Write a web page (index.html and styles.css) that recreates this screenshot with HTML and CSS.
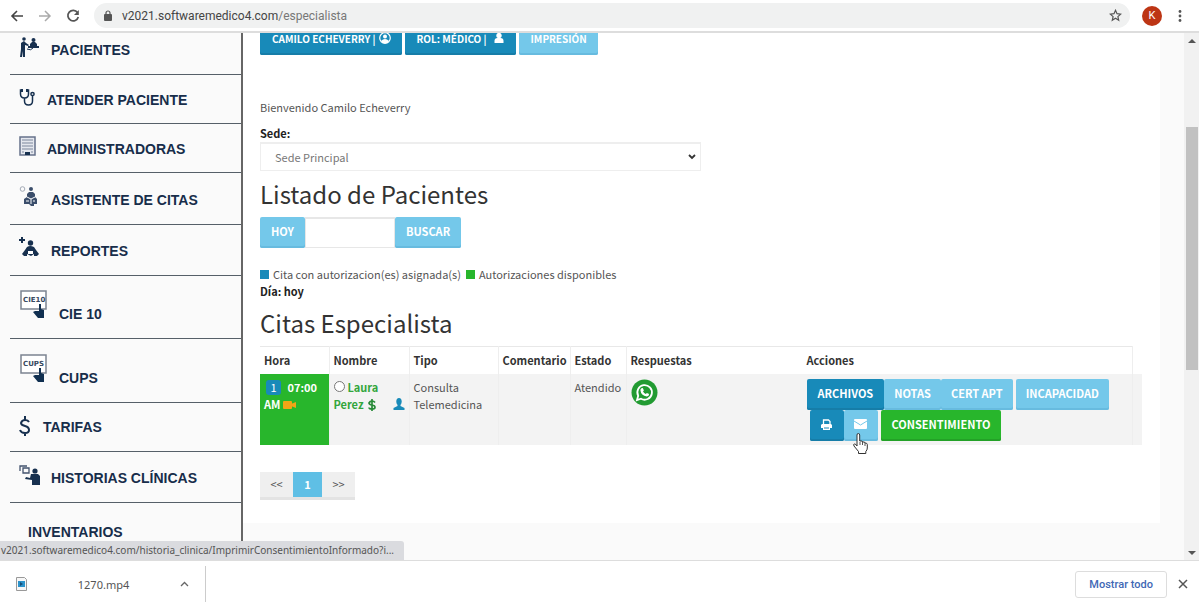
FILE: index.html
```html
<!DOCTYPE html>
<html lang="es">
<head>
<meta charset="utf-8">
<meta name="viewport" content="width=device-width, initial-scale=1">
<title>Especialista</title>
<link rel="stylesheet" href="styles.css">
</head>
<body>
<header class="toolbar">
  <button class="icon-btn" aria-label="Atrás"><svg width="14" height="14" viewBox="0 0 14 14" fill="none" stroke="#444" stroke-width="1.6"><path d="M13 7H2M7 2L2 7l5 5"/></svg></button>
  <button class="icon-btn" aria-label="Adelante"><svg width="14" height="14" viewBox="0 0 14 14" fill="none" stroke="#aaa" stroke-width="1.5"><path d="M1 7h11M7 2l5 5-5 5"/></svg></button>
  <button class="icon-btn" aria-label="Recargar"><svg width="14" height="14" viewBox="0 0 14 14" fill="none" stroke="#555" stroke-width="1.7"><path d="M11.5 3.5A5.3 5.3 0 1 0 12.3 8"/><path d="M12.8 1v5H8z" fill="#555" stroke="none"/></svg></button>
  <div class="address">
    <svg width="8" height="11" viewBox="0 0 8 11"><rect y="4" width="8" height="7" rx="1" fill="#555"/><path d="M2 5V3a2 2 0 0 1 4 0v2" fill="none" stroke="#555" stroke-width="1.2"/></svg>
    <span class="url">v2021.softwaremedico4.com<span class="path">/especialista</span></span>
    <svg class="star" width="13" height="13" viewBox="0 0 13 13" fill="none" stroke="#555" stroke-width="1.2"><path d="M6.500 1.300l1.500 3.400 3.700.4-2.800 2.500.8 3.600-3.200-1.900-3.200 1.900.8-3.600L1.300 5.100l3.700-.4z"/></svg>
  </div>
  <button class="avatar">K</button>
  <button class="icon-btn" aria-label="Menú"><svg width="4" height="14" viewBox="0 0 4 14" fill="#555"><circle cx="2" cy="2.500" r="1.400"/><circle cx="2" cy="7" r="1.400"/><circle cx="2" cy="11.500" r="1.400"/></svg></button>
</header>

<div class="viewport">
  <nav class="sidebar">
    <a class="item first" href="#"><svg width="21" height="21" viewBox="0 0 21 21" fill="#17304f"><circle cx="5" cy="2" r="1.800"/><path d="M2 6l3-2 2 2 3 2-1 1-3-1v4l0 8H4v-6l-1 6H1l1-8z"/><circle cx="14.500" cy="3" r="2"/><path d="M11 9V7l2-2h3l2 2v2h2v2H9V9z"/><path d="M8 12q4 2 6-1" fill="none" stroke="#17304f"/></svg>PACIENTES</a>
    <a class="item tight" href="#"><svg width="17" height="18" viewBox="0 0 17 18" fill="none" stroke="#17304f" stroke-width="1.500"><path d="M3 2H1.500v4q0 4 4 4t4-4V2H8M5.500 10v3q0 4 4 4t4-4V8"/><circle cx="13.500" cy="6" r="1.600"/><path d="M3 1v3M8 1v3" stroke-width="2"/></svg>ATENDER PACIENTE</a>
    <a class="item tight" href="#"><svg width="17" height="20" viewBox="0 0 17 20"><path d="M1 1h15v18H1z" fill="#e4e7ee" stroke="#66718b" stroke-width="1.500"/><path d="M3 4h11M3 7h11M3 10h11M3 13h11M3 16h2M12 16h2" stroke="#7d879b" stroke-width="1.200"/><path d="M6 19v-3h5v3z" fill="#17304f"/></svg>ADMINISTRADORAS</a>
    <a class="item tall" href="#"><svg width="21" height="21" viewBox="0 0 21 21" fill="#3b4e6b"><circle cx="3.500" cy="3" r="2.300" fill="none" stroke="#a3aab6"/><circle cx="12" cy="3" r="2"/><path d="M8 11V8l2-2h4l2 2v3l2 2v5h-3v2h-3l-2-2H5v-5z"/><path d="M8 11l4 2 4-2M7 15h3M14 15h2M12 13v5" stroke="#fff" fill="none"/></svg>ASISTENTE DE CITAS</a>
    <a class="item" href="#"><svg width="21" height="21" viewBox="0 0 21 21" fill="#17304f"><path d="M2 0h2v2h2v2H4v2H2V4H0V2h2z"/><circle cx="11.500" cy="6" r="2.700"/><path d="M8 10q3-2 7 0l2 3 3 4-2 2h-3v-2l-3 2-4-2v2H5l-2-2 3-4z"/><path d="M9 14h5v3H9z" fill="#fff"/></svg>REPORTES</a>
    <a class="item code short" href="#"><svg width="28" height="30" viewBox="0 0 28 30"><path d="M2 2h25v18H2z" fill="#fff" stroke="#7c8491" stroke-width="1.500"/><text x="4" y="13" class="code-text">CIE10</text><path d="M20 15h2v5l3 1v8h-6l-5-6 2-1h4z" fill="#102f50"/></svg>CIE 10</a>
    <a class="item code" href="#"><svg width="28" height="30" viewBox="0 0 28 30"><path d="M2 2h25v18H2z" fill="#fff" stroke="#7c8491" stroke-width="1.500"/><text x="4" y="13" class="code-text">CUPS</text><path d="M20 15h2v5l3 1v8h-6l-5-6 2-1h4z" fill="#102f50"/></svg>CUPS</a>
    <a class="item money" href="#"><svg width="12" height="20" viewBox="0 0 12 20" fill="none" stroke="#17304f" stroke-width="2"><path d="M10 6Q9 4 6 4T2 7q0 2 4 3t4 4q0 3-4 3t-5-3M6 0v4M6 16v4"/></svg>TARIFAS</a>
    <a class="item" href="#"><svg width="21" height="20" viewBox="0 0 21 20" fill="#17304f"><path d="M1 6V1h7M4 3h6v5H4z" fill="none" stroke="#43536e" stroke-width="1.300"/><circle cx="16" cy="6" r="2.600"/><path d="M12 9h7l2 2v9h-8v-5l-7-1 1-2 4 1z"/></svg>HISTORIAS CLÍNICAS</a>
    <a class="item last" href="#">INVENTARIOS</a>
  </nav>

  <div class="scroll">
  <main class="card">
    <div class="top-actions">
      <button class="btn dark">CAMILO ECHEVERRY | <svg width="12" height="12" viewBox="0 0 12 12"><circle cx="6" cy="6" r="5.300" fill="none" stroke="#fff" stroke-width="1.200"/><circle cx="6" cy="4.500" r="2" fill="#fff"/><path d="M2 9q4-4 8 0l-2 2H4z" fill="#fff"/></svg></button>
      <button class="btn dark">ROL: MÉDICO | <svg class="user" width="12" height="12" viewBox="0 0 12 12" fill="#fff"><circle cx="6" cy="3.500" r="2.700"/><path d="M1.500 11V9q0-3 3-3h3q3 0 3 3v2z"/></svg></button>
      <button class="btn light">IMPRESIÓN</button>
    </div>
    <p class="welcome">Bienvenido Camilo Echeverry</p>
    <label class="label" for="sede">Sede:</label>
    <div class="select-wrap">
      <select id="sede"><option>Sede Principal</option></select>
      <svg width="8" height="6" viewBox="0 0 8 6" fill="none" stroke="#333" stroke-width="1.800"><path d="M1 1l3 3 3-3"/></svg>
    </div>
    <h2>Listado de Pacientes</h2>
    <form class="search">
      <button type="button" class="btn light">HOY</button>
      <input type="text" aria-label="Fecha">
      <button type="button" class="btn light">BUSCAR</button>
    </form>
    <p class="legend"><i class="key blue"></i>Cita con autorizacion(es) asignada(s)<i class="key lime"></i>Autorizaciones disponibles</p>
    <p class="day">Día: hoy</p>
    <h2>Citas Especialista</h2>
    <table>
      <colgroup><col class="c-hora"><col class="c-nombre"><col class="c-tipo"><col class="c-com"><col class="c-est"><col class="c-resp"><col><col class="c-end"></colgroup>
      <thead><tr><th>Hora</th><th>Nombre</th><th>Tipo</th><th>Comentario</th><th>Estado</th><th class="open">Respuestas</th><th>Acciones</th><th></th></tr></thead>
      <tbody><tr>
        <td class="hora"><span class="badge">1</span> 07:00 AM <svg width="13" height="8" viewBox="0 0 13 8" fill="#f2a516"><rect width="9" height="8" rx="1"/><path d="M8 3l5-2v6l-5-2z"/></svg></td>
        <td class="nombre"><input type="radio" aria-label="Laura Perez"><a href="#">Laura Perez</a> <svg class="paid" width="8" height="12" viewBox="0 0 8 12" fill="none" stroke="#278a37" stroke-width="1.700"><path d="M7 3.500Q6 2 4 2T1 4q0 1.500 3 2t3 2.200Q7 10 4 10T1 8.500M4 0v12"/></svg><svg class="person" width="12" height="12" viewBox="0 0 12 12" fill="#188ab9"><ellipse cx="6" cy="3.500" rx="2.700" ry="3.500"/><path d="M4.500 6h3v2l4 2v2H.5v-2l4-2z"/></svg></td>
        <td>Consulta Telemedicina</td>
        <td></td>
        <td>Atendido</td>
        <td class="open resp"><a href="#" aria-label="WhatsApp"><svg width="27" height="27" viewBox="0 0 27 27"><circle cx="13.500" cy="13.500" r="13" fill="#229b32"/><path d="M6 21l1.200-4.200a7.300 7.300 0 1 1 2.800 2.900z" fill="none" stroke="#fff" stroke-width="1.800"/><path d="M10.500 9.200l1.300-.2 1.100 2.400-.9 1.100q1 1.800 2.800 2.600l1.100-1.100 2.200 1.100q0 2.200-2.300 2.400-5.800-.8-6.400-6.200 0-1.500 1.100-2.100z" fill="#fff"/></svg></a></td>
        <td class="acciones">
          <div class="row"><button class="btn dark">ARCHIVOS</button><button class="btn light">NOTAS</button><button class="btn light">CERT APT</button><button class="btn light gap">INCAPACIDAD</button></div>
          <div class="row second"><button class="btn dark square" aria-label="Imprimir"><svg width="11" height="11" viewBox="0 0 11 11"><path d="M2.500 5V1h5L9 2.500V5" fill="none" stroke="#fff" stroke-width="1.300"/><path d="M1 5h9l1 1v3H9v2H2V9H0V6z" fill="#fff"/><path d="M3 9h5" stroke="#188ab9"/></svg></button><button class="btn light square" aria-label="Enviar"><svg width="13" height="10" viewBox="0 0 13 10"><rect width="13" height="10" rx="1" fill="#fff"/><path d="M0 2l6.500 4L13 2" fill="none" stroke="#74c8ea"/></svg><svg class="cursor" width="15" height="21" viewBox="0 0 15 21"><path d="M4 12V2q0-1.500 1.300-1.500T6.700 2v6q3-.5 3 1 2.300-.5 2.300 1 2.300 0 2.300 1.500V15q0 2-1.500 3.500v2H5.500v-2L1 13q-1-2 .5-2T4 13z" fill="#fff" stroke="#333"/><path d="M7 12v-3M9.500 12v-3M12 13v-3" stroke="#555" fill="none"/></svg></button><button class="btn green gap">CONSENTIMIENTO</button></div>
        </td>
        <td></td>
      </tr></tbody>
    </table>
    <nav class="pages" aria-label="Páginas"><a href="#">&lt;&lt;</a><a href="#" class="current">1</a><a href="#">&gt;&gt;</a></nav>
  </main>
  </div>
  <div class="scrollbar"><i class="up"></i><i class="thumb"></i><i class="down"></i></div>
  <div class="status">v2021.softwaremedico4.com/historia_clinica/ImprimirConsentimientoInformado?i...</div>
</div>

<footer class="downloads">
  <div class="file">
    <svg width="11" height="14" viewBox="0 0 11 14"><path d="M.5.500h8l2 2v11H.5z" fill="#f7f7f7" stroke="#999"/><rect x="2" y="4" width="7" height="6" fill="#2c93cb"/><path d="M4 5l3 2-3 2z" fill="#174e76"/></svg>
    <span>1270.mp4</span>
    <button class="icon-btn" aria-label="Opciones"><svg width="9" height="6" viewBox="0 0 9 6" fill="none" stroke="#666" stroke-width="1.300"><path d="M1 5l3.500-3.500L8 5"/></svg></button>
  </div>
  <button class="show-all">Mostrar todo</button>
  <button class="icon-btn" aria-label="Cerrar"><svg width="10" height="10" viewBox="0 0 10 10" stroke="#555" stroke-width="1.500"><path d="M1 1l8 8M9 1L1 9"/></svg></button>
</footer>
</body>
</html>
```

FILE: styles.css
```css
* { box-sizing: border-box; }

body {
  margin: 0;
  height: 100vh;
  display: flex;
  flex-direction: column;
  overflow: hidden;
  background: #fff;
  color: #555;
  font: 11px/17px "Noto Sans CJK SC", "Open Sans", sans-serif;
}

button, input, select { font: inherit; margin: 0; }
p, h2 { margin: 0; }
a { color: inherit; text-decoration: none; }
svg { display: block; flex: none; }

.icon-btn {
  border: 0;
  padding: 0;
  background: none;
  display: flex;
}

/* Browser toolbar */
.toolbar {
  flex: none;
  height: 33px;
  display: flex;
  align-items: center;
  gap: 14px;
  padding: 0 17px 0 10px;
  border-bottom: 2px solid #ddd;
}
.address {
  flex: 1;
  height: 25px;
  display: flex;
  align-items: center;
  gap: 10px;
  padding: 0 8px 0 10px;
  border-radius: 13px;
  background: #f0f1f1;
}
.url {
  flex: 1;
  color: #444;
  font: 12px/16px Roboto, sans-serif;
}
.path { color: #777; }
.avatar {
  width: 20px;
  height: 20px;
  margin-right: 2px;
  margin-left: -2px;
  padding: 0;
  border: 0;
  border-radius: 50%;
  background: #bd3514;
  color: #fff;
  font: 11px/20px Roboto, sans-serif;
}

.viewport {
  flex: 1;
  min-height: 0;
  display: flex;
  position: relative;
  overflow: hidden;
  background: #fafafa;
}

/* Sidebar */
.sidebar {
  flex: none;
  width: 243px;
  padding-left: 10px;
  border-right: 2px solid #666;
}
.item {
  display: flex;
  align-items: center;
  gap: 11px;
  height: 51px;
  padding: 2px 0 0 9px;
  border-bottom: 1px solid #555f68;
  color: #172d4a;
  font: bold 14px/18px "Liberation Sans", sans-serif;
}
.item svg { margin-bottom: 7px; }
.first { height: 42px; padding: 0 0 8px 9px; }
.first svg { margin-bottom: 5px; }
.tight { height: 49px; }
.tall { height: 52px; }
.code { height: 64px; gap: 12px; padding-top: 14px; }
.short { height: 63px; }
.code svg { margin-bottom: 20px; }
.money { height: 49px; gap: 12px; padding-top: 0; }
.money svg { margin-bottom: 2px; }
.last { height: 60px; padding: 0 0 2px 18px; border: 0; }
.code-text { font: bold 7px "DejaVu Sans", sans-serif; fill: #374961; }

/* Content */
.scroll { flex: 1; min-width: 0; padding-right: 24px; }
.card {
  height: 490px;
  padding: 0 18px 0 17px;
  overflow: hidden;
  background: #fff;
}
.top-actions { display: flex; gap: 3px; margin-top: -9px; }
.top-actions .btn { font-size: 10px; padding-left: 12px; }
.btn {
  display: inline-flex;
  align-items: center;
  justify-content: center;
  gap: 3px;
  height: 31px;
  padding: 0 11px 3px;
  border: 0;
  border-radius: 2px;
  color: #fff;
  font-weight: 700;
  white-space: nowrap;
}
.dark { background: #188ab9; box-shadow: inset 0 -2px #167da8; }
.light { background: #74c8ea; box-shadow: inset 0 -2px #67bbdf; }
.green { background: #28b62c; box-shadow: inset 0 -2px #23a127; }
.user { margin-left: 3px; }
.welcome { margin-top: 44px; }
.label {
  display: block;
  margin-top: 9px;
  color: #222;
  font-weight: 700;
}
.select-wrap {
  display: grid;
  align-items: center;
  width: 50%;
}
.select-wrap > * { grid-area: 1 / 1; }
.select-wrap svg { justify-self: end; margin-right: 5px; pointer-events: none; }
select {
  appearance: none;
  width: 100%;
  height: 29px;
  padding: 0 14px;
  border: 1px solid #eee;
  border-top: 2px solid #eee;
  background: #fff;
  color: #777;
}
h2 {
  margin: 7px 0;
  color: #333;
  font-weight: 400;
  font-size: 24px;
  line-height: 32px;
}
.search { display: flex; }
.search input {
  width: 90px;
  border: 1px solid #e7e7e7;
  border-top-width: 2px;
}
.legend { display: flex; align-items: center; margin-top: 18px; }
.key { width: 9px; height: 9px; margin-right: 4px; }
.lime { margin-left: 5px; background: #28b62c; }
.blue { background: #188ab9; }
.day { color: #222; font-weight: 700; }

/* Appointments */
table {
  width: 100%;
  table-layout: fixed;
  border-collapse: collapse;
}
.c-hora { width: 69px; }
.c-nombre { width: 80px; }
.c-tipo { width: 89px; }
.c-com { width: 72px; }
.c-est { width: 56px; }
.c-resp { width: 176px; }
.c-end { width: 10px; }
th, td {
  padding: 5px 4px;
  border-right: 1px solid #eee;
  text-align: left;
  vertical-align: top;
}
th:last-child, td:last-child { border: 0; padding: 0; }
th { border-top: 1px solid #e8e8e8; color: #333; white-space: nowrap; }
td { height: 71px; background: #f3f3f3; }
td.hora { background: #28b62c; color: #fff; font-weight: 700; }
.hora svg { display: inline-block; }
.badge {
  display: inline-block;
  width: 15px;
  margin: 0 4px 0 2px;
  border-radius: 3px;
  background: #188ab9;
  line-height: 15px;
  font-weight: 400;
  text-align: center;
}
.nombre a { color: #32a63c; font-weight: 700; }
.nombre input { width: 11px; height: 11px; margin: 0 3px 0 0; }
.nombre svg { display: inline-block; vertical-align: middle; }
.nombre .paid { margin: 0 0 3px 2px; }
.nombre .person { float: right; margin-top: 2px; }
.open { border-right-color: transparent; }
.acciones { padding: 5px 4px 3px; }
.acciones .light { padding: 0 10px 3px; }
.row { display: flex; }
.second { padding-left: 3px; }
.gap { margin-left: 3px; }
.acciones .square { position: relative; width: 34px; padding: 0 0 3px; }
.cursor { position: absolute; left: 9px; top: 23px; }

.pages {
  display: inline-flex;
  margin-top: 27px;
  border-bottom: 3px solid #e3e3e3;
  background: #efefef;
  line-height: 25px;
}
.pages a { width: 33px; text-align: center; }
.pages .current { width: 29px; background: #5fbfe5; color: #fff; font-weight: 700; }

/* Scrollbar */
.scrollbar {
  flex: none;
  display: flex;
  flex-direction: column;
  align-items: center;
  width: 15px;
  padding: 6px 0 5px;
  background: #f1f1f1;
}
.up, .down { border: 4px solid transparent; }
.up { border-top: 0; border-bottom-color: #555; }
.down { margin-top: auto; border-bottom: 0; border-top-color: #555; }
.thumb { width: 12px; height: 47%; margin-top: 84px; background: #c1c1c1; }

.status {
  position: absolute;
  left: 0;
  bottom: 0;
  padding: 1px 10px 1px 1px;
  border-radius: 0 3px 0 0;
  background: #dadbdf;
  color: #555;
  font: 10px/17px "Noto Sans", sans-serif;
}

/* Downloads */
.downloads {
  flex: none;
  height: 42px;
  display: flex;
  align-items: center;
  gap: 11px;
  padding: 5px 11px 0 0;
  border-top: 1px solid #ddd;
  font-family: "Noto Sans", sans-serif;
}
.file {
  display: flex;
  align-items: center;
  align-self: stretch;
  width: 206px;
  margin-right: auto;
  padding: 0 16px;
  border-right: 1px solid #ccc;
}
.file span { margin: 0 auto; }
.show-all {
  height: 27px;
  padding: 0 13px;
  border: 1px solid #ddd;
  border-radius: 3px;
  background: #fff;
  color: #4168b5;
  font: 500 11px/17px Roboto, sans-serif;
}
```
